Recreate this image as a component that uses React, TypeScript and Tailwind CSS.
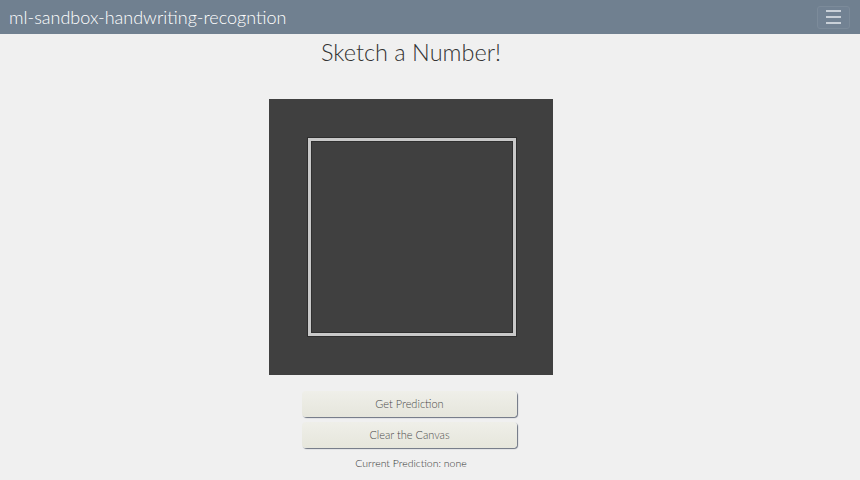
export default function App() {
  return (
    <div className="min-h-[480px] bg-[#f0f0f0] font-['Lato',sans-serif] text-[#333]">
      <nav className="flex h-[34px] items-center justify-between bg-[#708090] pl-[9px] pr-[10px]">
        <div className="text-[18px] font-light leading-none text-white">ml-sandbox-handwriting-recogntion</div>
        <button className="flex h-[23px] w-[33px] flex-col items-center justify-center gap-[4px] rounded-[3px] border border-[#7c8b9a] bg-[#728293]">
          <span className="block h-[2px] w-[15px] bg-[#c9d0d8]" />
          <span className="block h-[2px] w-[15px] bg-[#c9d0d8]" />
          <span className="block h-[2px] w-[15px] bg-[#c9d0d8]" />
        </button>
      </nav>
      <main className="flex flex-col items-center pr-[38px]">
        <h1 className="mt-[3px] text-[23.5px] font-light leading-[30px] text-[#333]">Sketch a Number!</h1>
        <div className="mt-[32px] flex h-[276px] w-[284px] items-center justify-center bg-[#404040]">
          <div className="ml-[2px] h-[200px] w-[210px] border border-[#2e2e2e]">
            <div className="h-full w-full border-[3px] border-[#c9c9c9]">
              <div className="h-full w-full border border-[#2f2f2f] bg-[#404040]" />
            </div>
          </div>
        </div>
        <div className="mr-[3px] mt-[16px] flex flex-col gap-[5px]">
          <button className="h-[26px] w-[215px] rounded-[4px] bg-gradient-to-b from-[#efefe9] to-[#e6e6dc] text-[11px] font-light text-[#4a4a4a] shadow-[1px_1px_1px_#6b7280]">
            Get Prediction
          </button>
          <button className="h-[26px] w-[215px] rounded-[4px] bg-gradient-to-b from-[#efefe9] to-[#e6e6dc] text-[11px] font-light text-[#4a4a4a] shadow-[1px_1px_1px_#6b7280]">
            Clear the Canvas
          </button>
        </div>
        <p className="mt-[8px] text-[10.5px] font-light text-[#333]">Current Prediction: none</p>
      </main>
    </div>
  );
}
